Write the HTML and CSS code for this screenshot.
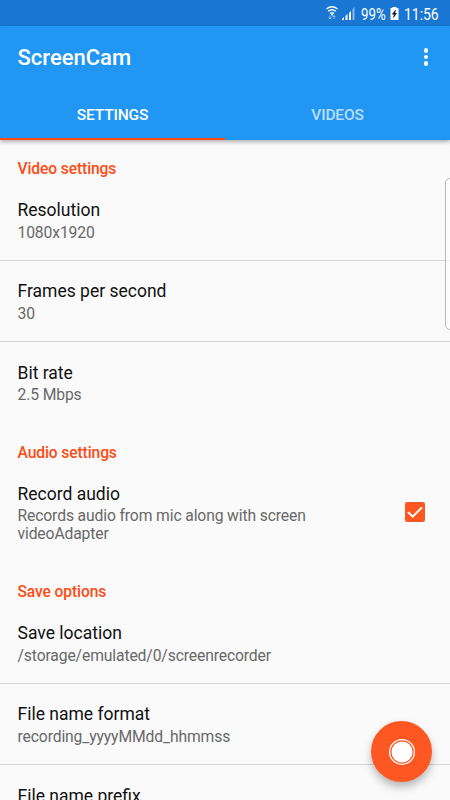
FILE: index.html
```html
<!DOCTYPE html>
<html lang="en"><head><meta charset="utf-8"><title>ScreenCam</title><link rel="stylesheet" href="styles.css"></head>
<body>
<div class="screen">
<div class="status">
<svg class="wifi" width="12" height="14" viewBox="0 0 12 14"><g fill="none" stroke="#fff" stroke-width="1.300"><path d="M.5 3Q6-1.500 11.500 3M2.200 5.300Q6 2.200 9.800 5.300M4 7.500Q6 5.800 8 7.500"/></g><circle cx="6" cy="8.500" r="1" fill="#fff"/><path d="M4 13V9.500M2.500 11.500L4 13l1.500-1.500M8 13V9.500M6.500 11L8 9.500 9.500 11" fill="none" stroke="#fff" stroke-opacity=".55"/></svg>
<svg class="signal" width="13" height="13" viewBox="0 0 13 13"><g fill="#fff"><path d="M0 13v-1l2-2v3zM3.500 13V9l2-2v6zM7 13V6l2-2v9z"/><path d="M10.500 13V2l2-2v13z" opacity=".5"/></g></svg>
<span class="pct">99%</span>
<svg class="battery" width="9" height="13" viewBox="0 0 9 13"><path d="M2.500 0h4v1H8.500v12H.5V1h2z" fill="#fff"/><path d="M5.500 3L2.300 7.200h2L3.500 10.500l3.200-4.200h-2z" fill="#111" stroke="#111" stroke-width=".5"/></svg>
<span class="clock">11:56</span>
</div>
<header class="appbar">
<div class="toolbar"><h1>ScreenCam</h1><div class="more"><i></i><i></i><i></i></div></div>
<nav class="tabs"><div class="tab active">SETTINGS</div><div class="tab">VIDEOS</div></nav>
</header>
<main class="list">
<h2>Video settings</h2>
<section class="row line"><h3>Resolution</h3><p>1080x1920</p></section>
<section class="row line"><h3>Frames per second</h3><p>30</p></section>
<section class="row"><h3>Bit rate</h3><p>2.5 Mbps</p></section>
<h2>Audio settings</h2>
<section class="row audio"><div><h3>Record audio</h3><p>Records audio from mic along with screen<br>videoAdapter</p></div>
<svg class="check" width="20" height="20" viewBox="0 0 20 20"><rect width="20" height="20" rx="2" fill="#ff5722"/><path d="M3 10l4.700 4.700L17 5.400" fill="none" stroke="#fff" stroke-width="2"/></svg></section>
<h2>Save options</h2>
<section class="row line"><h3>Save location</h3><p>/storage/emulated/0/screenrecorder</p></section>
<section class="row line"><h3>File name format</h3><p>recording_yyyyMMdd_hhmmss</p></section>
<section class="row"><h3>File name prefix</h3></section>
</main>
<div class="edge"></div>
<div class="fab"><svg width="28" height="28" viewBox="0 0 28 28"><circle cx="14" cy="14" r="12.400" fill="none" stroke="#fff" stroke-width="1.300"/><circle cx="14" cy="14" r="10.500" fill="#fff"/></svg></div>
</div>
</body></html>
```

FILE: styles.css
```css
*{box-sizing:border-box;margin:0;padding:0}
body{font-family:Roboto,sans-serif;background:#fafafa;color:#111}
.screen{position:relative;width:450px;height:800px;overflow:hidden}
.status{height:26px;background:#1976d2;color:#fff;display:flex;align-items:center;justify-content:flex-end;padding-right:11px;font-size:16px}
.wifi{margin-right:4px}
.signal{margin-right:6px}
.pct,.clock{white-space:nowrap;line-height:26px;padding-top:3px;transform-origin:left center}
.pct{width:26px;transform:scaleX(.83)}
.clock{width:35px;transform:scaleX(.87)}
.battery{margin:0 5px 0 3px}
.appbar{height:114px;background:#2196f3;color:#fff;box-shadow:0 2px 4px rgba(0,0,0,.3);position:relative}
.toolbar{height:63px;padding:0 22px 0 17.500px;display:flex;align-items:center;justify-content:space-between}
h1{font-size:22px;font-weight:500;line-height:26px;padding-top:1px}
.more{display:grid;gap:2.200px;padding-bottom:1px}
.more i{width:4.400px;height:4.400px;border-radius:50%;background:#fff}
.tabs{display:flex;height:51px}
.tab{flex:1;text-align:center;line-height:50px;font-size:15.500px;letter-spacing:-.15px;font-weight:500;color:rgba(255,255,255,.7);padding-top:1px}
.active{flex:0 0 225px;color:#fff;box-shadow:inset 0 -2px #ff4a0c}
h2{font-size:15.600px;letter-spacing:-.1px;line-height:20px;font-weight:500;color:#ff4a14;padding:19px 17.500px 1px}
.row{height:81.200px;padding:19.300px 17.500px 0}
.line{border-bottom:1px solid #d5d5d5}
h3{font-size:17.500px;line-height:22px;font-weight:400;color:#111}
p{font-size:15.700px;letter-spacing:-.13px;line-height:18px;color:#686868;padding-top:2.600px}
.audio{height:99.300px;display:flex;justify-content:space-between}
.check{margin:19.400px 7.500px 0 0}
.edge{position:absolute;right:-5px;top:178px;width:10px;height:152px;border:1px solid #bbb;border-radius:6px;background:rgba(252,252,252,.8)}
.fab{position:absolute;left:371px;top:721px;width:61px;height:61px;border-radius:50%;background:#ff5722;box-shadow:0 5px 9px rgba(0,0,0,.27);display:flex;align-items:center;justify-content:center}
```
